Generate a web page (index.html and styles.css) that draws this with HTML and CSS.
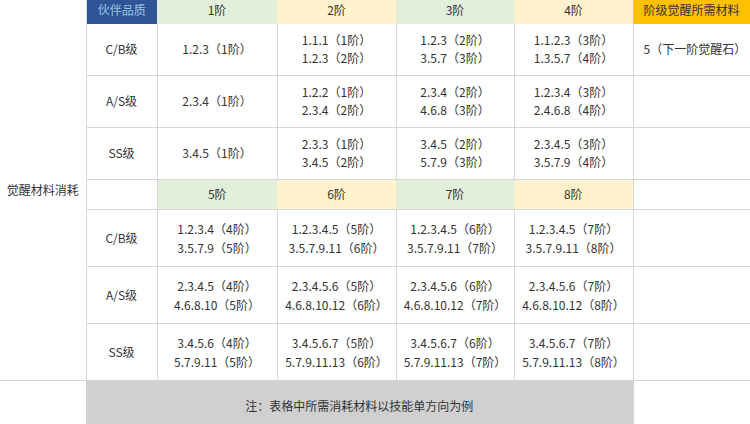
FILE: index.html
```html
<!DOCTYPE html>
<html lang="zh-CN">
<head>
<meta charset="utf-8">
<title>觉醒材料消耗</title>
<link rel="stylesheet" href="styles.css">
</head>
<body>
<table class="tbl">
  <colgroup>
    <col class="w-side">
    <col class="w-q">
    <col class="w-a">
    <col class="w-b">
    <col class="w-c">
    <col class="w-d">
    <col class="w-e">
  </colgroup>
  <tbody>
    <tr class="r-h1">
      <td class="side" rowspan="8">觉醒材料消耗</td>
      <th class="h-blue">伙伴品质</th>
      <th class="h-green">1阶</th>
      <th class="h-yellow">2阶</th>
      <th class="h-green">3阶</th>
      <th class="h-yellow">4阶</th>
      <th class="h-orange">阶级觉醒所需材料</th>
    </tr>
    <tr class="r-a first">
      <td class="q">C/B级</td>
      <td class="v"><div>1.2.3（1阶）</div></td>
      <td class="v"><div>1.1.1（1阶）</div><div>1.2.3（2阶）</div></td>
      <td class="v"><div>1.2.3（2阶）</div><div>3.5.7（3阶）</div></td>
      <td class="v"><div>1.1.2.3（3阶）</div><div>1.3.5.7（4阶）</div></td>
      <td class="m">5（下一阶觉醒石）</td>
    </tr>
    <tr class="r-b">
      <td class="q">A/S级</td>
      <td class="v"><div>2.3.4（1阶）</div></td>
      <td class="v"><div>1.2.2（1阶）</div><div>2.3.4（2阶）</div></td>
      <td class="v"><div>2.3.4（2阶）</div><div>4.6.8（3阶）</div></td>
      <td class="v"><div>1.2.3.4（3阶）</div><div>2.4.6.8（4阶）</div></td>
      <td class="m"></td>
    </tr>
    <tr class="r-b">
      <td class="q">SS级</td>
      <td class="v"><div>3.4.5（1阶）</div></td>
      <td class="v"><div>2.3.3（1阶）</div><div>3.4.5（2阶）</div></td>
      <td class="v"><div>3.4.5（2阶）</div><div>5.7.9（3阶）</div></td>
      <td class="v"><div>2.3.4.5（3阶）</div><div>3.5.7.9（4阶）</div></td>
      <td class="m"></td>
    </tr>
    <tr class="r-h2">
      <td class="q"></td>
      <th class="h-green">5阶</th>
      <th class="h-yellow">6阶</th>
      <th class="h-green">7阶</th>
      <th class="h-yellow">8阶</th>
      <td class="m"></td>
    </tr>
    <tr class="r-c">
      <td class="q">C/B级</td>
      <td class="v"><div>1.2.3.4（4阶）</div><div>3.5.7.9（5阶）</div></td>
      <td class="v"><div>1.2.3.4.5（5阶）</div><div>3.5.7.9.11（6阶）</div></td>
      <td class="v"><div>1.2.3.4.5（6阶）</div><div>3.5.7.9.11（7阶）</div></td>
      <td class="v"><div>1.2.3.4.5（7阶）</div><div>3.5.7.9.11（8阶）</div></td>
      <td class="m"></td>
    </tr>
    <tr class="r-c">
      <td class="q">A/S级</td>
      <td class="v"><div>2.3.4.5（4阶）</div><div>4.6.8.10（5阶）</div></td>
      <td class="v"><div>2.3.4.5.6（5阶）</div><div>4.6.8.10.12（6阶）</div></td>
      <td class="v"><div>2.3.4.5.6（6阶）</div><div>4.6.8.10.12（7阶）</div></td>
      <td class="v"><div>2.3.4.5.6（7阶）</div><div>4.6.8.10.12（8阶）</div></td>
      <td class="m"></td>
    </tr>
    <tr class="r-c">
      <td class="q">SS级</td>
      <td class="v"><div>3.4.5.6（4阶）</div><div>5.7.9.11（5阶）</div></td>
      <td class="v"><div>3.4.5.6.7（5阶）</div><div>5.7.9.11.13（6阶）</div></td>
      <td class="v"><div>3.4.5.6.7（6阶）</div><div>5.7.9.11.13（7阶）</div></td>
      <td class="v"><div>3.4.5.6.7（7阶）</div><div>5.7.9.11.13（8阶）</div></td>
      <td class="m"></td>
    </tr>
    <tr class="r-note">
      <td class="blank"></td>
      <td class="note" colspan="5">注：表格中所需消耗材料以技能单方向为例</td>
      <td class="m"></td>
    </tr>
  </tbody>
</table>
</body>
</html>
```

FILE: styles.css
```css
html, body {
  margin: 0;
  padding: 0;
  background: #ffffff;
}
body {
  font-family: "Noto Sans CJK SC", "Noto Sans", sans-serif;
  font-size: 12px;
  color: #333333;
  overflow: hidden;
}
.tbl {
  width: 750px;
  border-collapse: collapse;
  table-layout: fixed;
}
.w-side { width: 86px; }
.w-q { width: 71px; }
.w-a { width: 120px; }
.w-b { width: 119px; }
.w-c { width: 118px; }
.w-d { width: 119px; }
.w-e { width: 117px; }

.tbl td, .tbl th {
  padding: 0;
  text-align: center;
  vertical-align: middle;
  font-weight: normal;
  line-height: 18px;
  white-space: nowrap;
}
.tbl th {
  border: none;
}
.tbl .q, .tbl .v, .tbl .m {
  border: 1px solid #d6d6d6;
}
.tbl .m {
  border-right: none;
  text-align: left;
  padding-left: 10px;
}
.tbl .first td {
  border-top: none;
}
.side {
  border-right: 1px solid #d6d6d6;
  border-bottom: 1px solid #d6d6d6;
  color: #333333;
}
.blank {
  border: none;
}
.r-h1 { height: 24px; }
.r-a { height: 51px; }
.r-b { height: 52px; }
.r-h2 { height: 30px; }
.r-c { height: 57px; }
.r-note { height: 44px; }
.r-c .v { line-height: 19px; }

.h-blue {
  background: #2f5597;
  color: #9dc3e6;
}
.h-green {
  background: #e2efda;
}
.h-yellow {
  background: #fff2cc;
}
.h-orange {
  background: #ffc000;
  color: #333333;
}
.r-h1 th {
  line-height: 20px;
  vertical-align: top;
}
.tbl .note {
  background: #d0d0d0;
  border-top: 1px solid #d6d6d6;
  padding-top: 8px;
}
.r-note .m {
  border-bottom: none;
}
```
